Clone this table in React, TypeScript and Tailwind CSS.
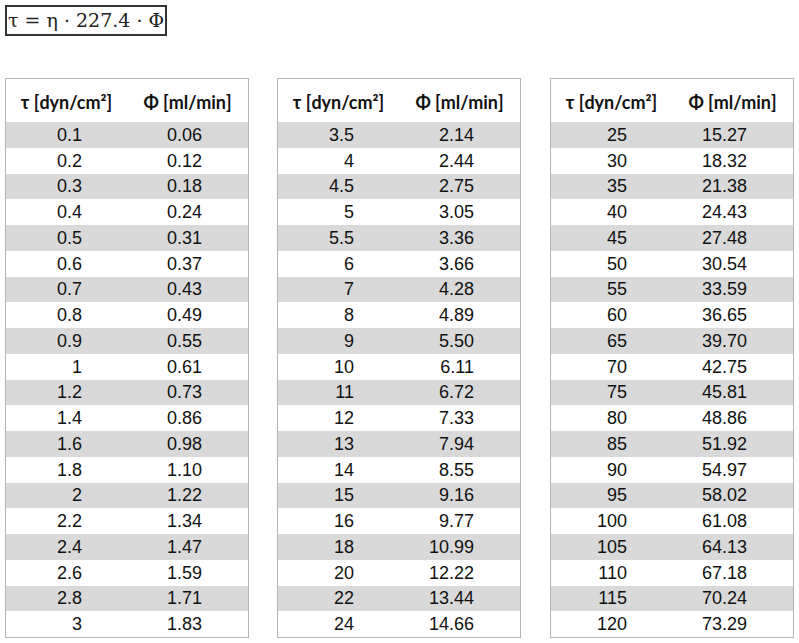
const tables: [string, string][][] = [
  [
    ["0.1", "0.06"], ["0.2", "0.12"], ["0.3", "0.18"], ["0.4", "0.24"], ["0.5", "0.31"],
    ["0.6", "0.37"], ["0.7", "0.43"], ["0.8", "0.49"], ["0.9", "0.55"], ["1", "0.61"],
    ["1.2", "0.73"], ["1.4", "0.86"], ["1.6", "0.98"], ["1.8", "1.10"], ["2", "1.22"],
    ["2.2", "1.34"], ["2.4", "1.47"], ["2.6", "1.59"], ["2.8", "1.71"], ["3", "1.83"],
  ],
  [
    ["3.5", "2.14"], ["4", "2.44"], ["4.5", "2.75"], ["5", "3.05"], ["5.5", "3.36"],
    ["6", "3.66"], ["7", "4.28"], ["8", "4.89"], ["9", "5.50"], ["10", "6.11"],
    ["11", "6.72"], ["12", "7.33"], ["13", "7.94"], ["14", "8.55"], ["15", "9.16"],
    ["16", "9.77"], ["18", "10.99"], ["20", "12.22"], ["22", "13.44"], ["24", "14.66"],
  ],
  [
    ["25", "15.27"], ["30", "18.32"], ["35", "21.38"], ["40", "24.43"], ["45", "27.48"],
    ["50", "30.54"], ["55", "33.59"], ["60", "36.65"], ["65", "39.70"], ["70", "42.75"],
    ["75", "45.81"], ["80", "48.86"], ["85", "51.92"], ["90", "54.97"], ["95", "58.02"],
    ["100", "61.08"], ["105", "64.13"], ["110", "67.18"], ["115", "70.24"], ["120", "73.29"],
  ],
];

function FlowTable({ rows }: { rows: [string, string][] }) {
  return (
    <div className="w-[244px] border border-[#b4b4b4] bg-white">
      <div className="grid grid-cols-2 h-[43px] pt-[3px] items-center text-center font-['Lato',sans-serif] font-bold text-[18px] text-[#111]">
        <div>τ [dyn/cm²]</div>
        <div>Φ [ml/min]</div>
      </div>
      {rows.map(([tau, phi], i) => (
        <div
          key={i}
          className={`grid grid-cols-2 h-[25.75px] items-center font-['Liberation_Sans',Arial,sans-serif] text-[18px] leading-none text-[#111] ${
            i % 2 === 0 ? "bg-[#d9d9d9]" : "bg-white"
          }`}
        >
          <div className="text-right pr-[45px]">{tau}</div>
          <div className="text-right pr-[46px]">{phi}</div>
        </div>
      ))}
    </div>
  );
}

export default function App() {
  return (
    <div className="w-[799px] h-[643px] bg-white overflow-hidden pt-[5px]">
      <div className="ml-[5px] inline-block border-2 border-[#333] px-[1px] h-[31px] leading-[27px] font-['DejaVu_Serif','Liberation_Serif',serif] text-[19px] text-[#222]">
        τ = η · 227.4 · Φ
      </div>
      <div className="flex mt-[42px] ml-[5px]">
        <FlowTable rows={tables[0]} />
        <div className="ml-[28px]">
          <FlowTable rows={tables[1]} />
        </div>
        <div className="ml-[29px]">
          <FlowTable rows={tables[2]} />
        </div>
      </div>
    </div>
  );
}
